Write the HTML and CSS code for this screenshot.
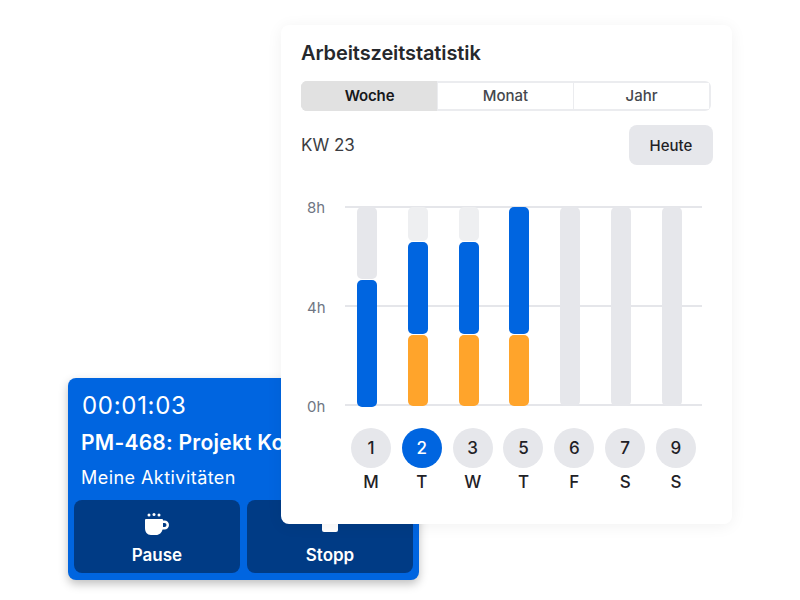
FILE: index.html
```html
<!DOCTYPE html>
<html lang="en">
<head>
    <meta charset="UTF-8">
    <title>Arbeitszeitstatistik</title>
    <link rel="stylesheet" href="styles.css">
</head>
<body>
    <div class="timer-card">
        <div class="timer-time">00:01:03</div>
        <div class="timer-task">PM-468: Projekt Kommunikation</div>
        <div class="timer-activity">Meine Aktivitäten</div>
        <div class="timer-actions">
            <button class="timer-btn">
                <svg class="timer-icon" viewBox="0 0 24 24" width="24" height="24">
                    <circle cx="4" cy="3" r="1.5" fill="#fff"/>
                    <circle cx="9" cy="2.500" r="1.500" fill="#fff"/>
                    <circle cx="14" cy="3" r="1.500" fill="#fff"/>
                    <path fill="#fff" fill-rule="evenodd" d="M1 7h16a1 1 0 0 1 1 1v.5h1.500a4.500 4.500 0 0 1 0 9h-1.900c-.9 3-3 5.500-6.600 5.500H6c-4 0-6-3-6-7V8a1 1 0 0 1 1-1zM18 11v4h1.500a2 2 0 0 0 0-4z"/>
                </svg>
                <span>Pause</span>
            </button>
            <button class="timer-btn">
                <svg class="timer-icon" viewBox="0 0 24 24" width="24" height="24">
                    <rect x="4" y="2" width="16" height="18" rx="2" fill="#fff"/>
                </svg>
                <span>Stopp</span>
            </button>
        </div>
    </div>

    <div class="stats-card">
        <h1 class="stats-title">Arbeitszeitstatistik</h1>
        <div class="tabs">
            <div class="tab active">Woche</div>
            <div class="tab">Monat</div>
            <div class="tab">Jahr</div>
        </div>
        <div class="week-row">
            <span class="week-label">KW 23</span>
            <button class="today-btn">Heute</button>
        </div>
        <div class="chart">
            <div class="axis">
                <span>8h</span>
                <span>4h</span>
                <span>0h</span>
            </div>
            <div class="plot">
                <div class="gridlines">
                    <div class="gridline"></div>
                    <div class="gridline"></div>
                    <div class="gridline"></div>
                </div>
                <div class="bars">
                    <div class="bar">
                        <div class="seg seg-empty" style="height: 72px"></div>
                        <div class="seg seg-blue" style="height: 127px"></div>
                    </div>
                    <div class="bar">
                        <div class="seg seg-light" style="height: 34px"></div>
                        <div class="seg seg-blue" style="height: 92px"></div>
                        <div class="seg seg-orange" style="height: 71px"></div>
                    </div>
                    <div class="bar">
                        <div class="seg seg-light" style="height: 34px"></div>
                        <div class="seg seg-blue" style="height: 92px"></div>
                        <div class="seg seg-orange" style="height: 71px"></div>
                    </div>
                    <div class="bar">
                        <div class="seg seg-blue" style="height: 127px"></div>
                        <div class="seg seg-orange" style="height: 71px"></div>
                    </div>
                    <div class="bar"><div class="seg seg-empty" style="height: 199px"></div></div>
                    <div class="bar"><div class="seg seg-empty" style="height: 199px"></div></div>
                    <div class="bar"><div class="seg seg-empty" style="height: 199px"></div></div>
                </div>
            </div>
        </div>
        <div class="days">
            <div class="day"><div class="day-num">1</div><div class="day-name">M</div></div>
            <div class="day"><div class="day-num selected">2</div><div class="day-name">T</div></div>
            <div class="day"><div class="day-num">3</div><div class="day-name">W</div></div>
            <div class="day"><div class="day-num">5</div><div class="day-name">T</div></div>
            <div class="day"><div class="day-num">6</div><div class="day-name">F</div></div>
            <div class="day"><div class="day-num">7</div><div class="day-name">S</div></div>
            <div class="day"><div class="day-num">9</div><div class="day-name">S</div></div>
        </div>
    </div>
</body>
</html>
```
FILE: styles.css
```css
* {
    box-sizing: border-box;
}
body {
    font-family: Inter, 'Liberation Sans', sans-serif;
    margin: 0;
    width: 800px;
    height: 600px;
    background-color: #fff;
    color: #1f2126;
    overflow: hidden;
    position: relative;
}
.timer-card {
    position: absolute;
    left: 68px;
    top: 378px;
    width: 351px;
    height: 202px;
    padding: 6px;
    background-color: #0065e0;
    border-radius: 8px;
    box-shadow: 0 4px 10px rgba(0, 0, 0, 0.25);
    color: #fff;
    overflow: hidden;
}
.timer-time {
    font-size: 24px;
    line-height: 30px;
    margin: 7px 0 0 8px;
    letter-spacing: 0.7px;
    white-space: nowrap;
}
/* cut off where the stats card starts */
.timer-task {
    width: 200px;
    overflow: hidden;
    font-size: 21px;
    font-weight: 600;
    line-height: 24px;
    margin: 10px 0 0 7px;
    letter-spacing: 0.25px;
    white-space: nowrap;
}
.timer-activity {
    font-size: 18px;
    line-height: 22px;
    margin: 12px 0 0 7px;
    letter-spacing: 0.45px;
    white-space: nowrap;
}
.timer-actions {
    display: flex;
    gap: 7px;
    margin-top: 11px;
}
.timer-btn {
    flex: 1;
    height: 73px;
    background-color: #003b85;
    border: none;
    border-radius: 8px;
    color: #fff;
    font-family: inherit;
    font-size: 17px;
    font-weight: 600;
    display: flex;
    flex-direction: column;
    align-items: center;
    padding: 12px 0 0;
}
.timer-icon {
    display: block;
    margin-bottom: 9px;
}
.stats-card {
    position: absolute;
    left: 281px;
    top: 25px;
    width: 451px;
    height: 499px;
    padding: 16px 20px;
    background-color: #fff;
    border-radius: 8px;
    box-shadow: 0 2px 16px rgba(0, 0, 0, 0.06);
}
.stats-title {
    font-size: 20px;
    font-weight: 600;
    line-height: 24px;
    margin: 0;
    letter-spacing: -0.1px;
    color: #26282c;
}
.tabs {
    display: flex;
    width: 410px;
    height: 30px;
    margin-top: 16px;
    border-radius: 6px;
    overflow: hidden;
}
.tab {
    flex: 1;
    text-align: center;
    font-size: 15px;
    font-weight: 500;
    line-height: 26px;
    color: #45474d;
    border: 2px solid #ebecef;
    border-left-width: 1px;
    border-right-width: 0;
}
.tab:last-child {
    border-right-width: 2px;
}
.tab.active {
    background-color: #e1e1e1;
    border-color: #e1e1e1;
    color: #17181b;
    font-weight: 600;
    letter-spacing: -0.15px;
}
.week-row {
    display: flex;
    justify-content: space-between;
    align-items: center;
    width: 412px;
    margin-top: 14px;
}
.week-label {
    font-size: 17px;
    color: #3b3d42;
}
.today-btn {
    width: 84px;
    height: 40px;
    background-color: #e6e7eb;
    border: none;
    border-radius: 8px;
    font-family: inherit;
    font-size: 15px;
    font-weight: 500;
    color: #1f2126;
}
.chart {
    display: flex;
    margin-top: 41px;
    height: 201px;
}
.axis {
    width: 44px;
    height: 217px;
    margin-top: -7px;
    padding-left: 6px;
    display: flex;
    flex-direction: column;
    justify-content: space-between;
    font-size: 15px;
    line-height: 18px;
    color: #6f7683;
    flex-shrink: 0;
}
.plot {
    position: relative;
    width: 357px;
    height: 200px;
}
.gridlines {
    position: absolute;
    inset: 0;
    display: flex;
    flex-direction: column;
    justify-content: space-between;
}
.gridline {
    height: 2px;
    background-color: #e5e6ea;
}
.bars {
    position: absolute;
    left: 12px;
    top: 1px;
    display: flex;
    gap: 30.83px;
}
.bar {
    width: 20px;
    display: flex;
    flex-direction: column;
    gap: 1px;
}
.seg {
    border-radius: 5px;
}
.seg-empty {
    background-color: #e6e7eb;
}
.seg-light {
    background-color: #eeeff1;
}
.seg-blue {
    background-color: #0065e0;
}
.seg-orange {
    background-color: #ffa42b;
}
.days {
    display: flex;
    gap: 10.83px;
    margin: 21px 0 0 50px;
}
.day {
    width: 40px;
    text-align: center;
}
.day-num {
    width: 40px;
    height: 40px;
    border-radius: 50%;
    background-color: #e6e7eb;
    font-size: 17px;
    font-weight: 500;
    line-height: 40px;
}
.day-num.selected {
    background-color: #0065e0;
    color: #fff;
}
.day-name {
    font-size: 17px;
    font-weight: 500;
    line-height: 20px;
    margin-top: 4px;
}
```
